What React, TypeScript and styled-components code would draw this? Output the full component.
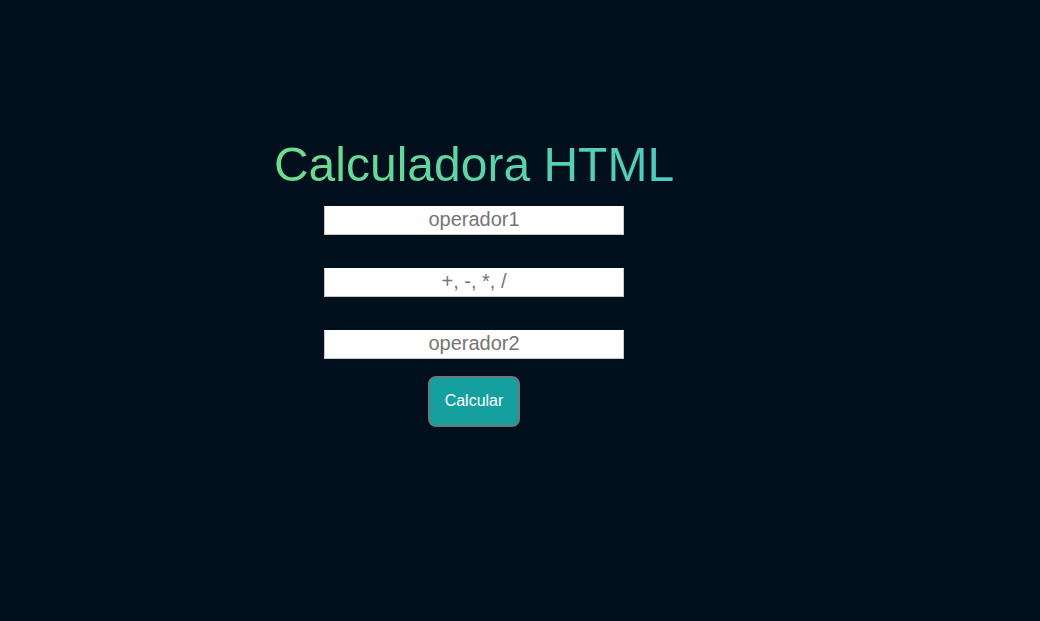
import React from 'react';
import styled, { createGlobalStyle } from 'styled-components';

const Global = createGlobalStyle`
  html, body {
    margin: 0;
    padding: 0;
    background: #020f1c;
    font-family: "Liberation Sans", Arial, sans-serif;
  }
`;

const Page = styled.div`
  min-height: 621px;
  box-sizing: border-box;
  padding: 138px 0 0 274px;
`;

const Calculator = styled.div`
  width: 400px;
  display: flex;
  flex-direction: column;
  align-items: center;
`;

const Title = styled.h1`
  margin: 0 0 14px;
  font-size: 48px;
  font-weight: normal;
  line-height: 54px;
  white-space: nowrap;
  background: linear-gradient(90deg, #6fdc8c, #4ecbbf);
  -webkit-background-clip: text;
  background-clip: text;
  color: transparent;
`;

const Field = styled.input<{ $last?: boolean }>`
  width: 300px;
  height: 29px;
  box-sizing: border-box;
  margin-bottom: ${(p) => (p.$last ? '17px' : '33px')};
  border: 1px solid #c8c8c8;
  border-top-color: #ffffff;
  background: #ffffff;
  font-family: "Liberation Sans", Arial, sans-serif;
  font-size: 20px;
  text-align: center;
  padding: 0 0 2px;
  outline: none;

  &::placeholder {
    color: #757575;
  }
`;

const Button = styled.button`
  width: 92px;
  height: 51px;
  border: 2px solid #677a80;
  border-radius: 8px;
  background: #15a09f;
  color: #ffffff;
  font-family: "Liberation Sans", Arial, sans-serif;
  font-size: 16px;
  padding: 0 0 2px;
  cursor: pointer;
`;

export default function App() {
  return (
    <Page>
      <Global />
      <Calculator>
        <Title>Calculadora HTML</Title>
        <Field type="text" placeholder="operador1" />
        <Field type="text" placeholder="+, -, *, /" />
        <Field type="text" placeholder="operador2" $last />
        <Button>Calcular</Button>
      </Calculator>
    </Page>
  );
}
